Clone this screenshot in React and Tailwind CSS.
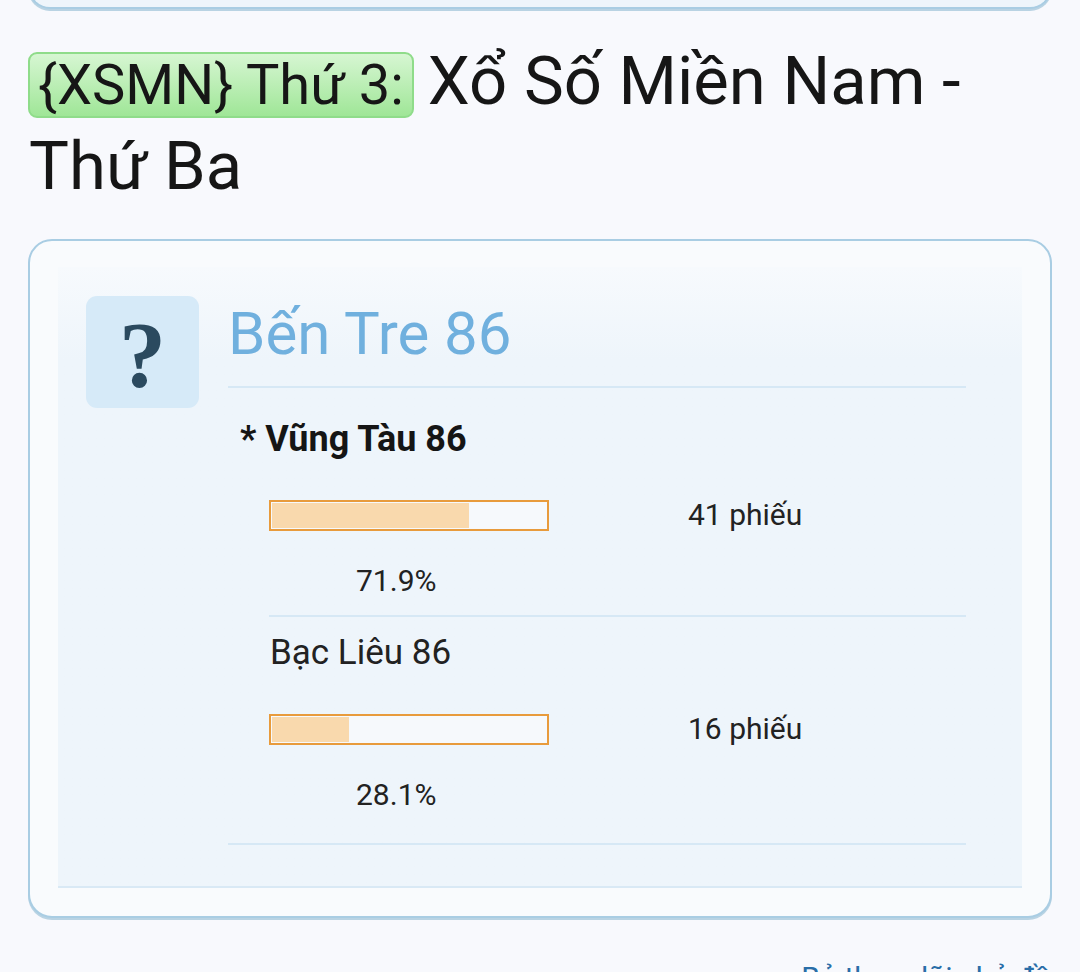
export default function App() {
  const options = [
    { name: '* Vũng Tàu 86', bold: true, votes: 41, pct: 71.9 },
    { name: 'Bạc Liêu 86', bold: false, votes: 16, pct: 28.1 },
  ];

  return (
    <div className="min-h-[972px] w-[1080px] overflow-hidden bg-[#f8f9fd] font-['Roboto',sans-serif] text-[#1a1a1a]">
      {/* tail of the previous card */}
      <div className="mx-[28px] -mt-[40px] h-[49px] rounded-b-[22px] border-2 border-t-0 border-[#a9cde3] bg-[#eef5fb] shadow-[0_2px_0_#b9d3e3]" />

      {/* title */}
      <h1 className="mt-[30px] px-[28px] text-[67px] font-normal leading-[85px] text-[#161616]">
        <span className="mr-[14px] inline-block rounded-[9px] border-2 border-[#8fdc8a] bg-gradient-to-b from-[#d6f6d2] to-[#9fe697] px-[8px] text-[56px] leading-[62px]">
          {'{XSMN} Thứ 3:'}
        </span>
        Xổ Số Miền Nam -<br />
        <span className="ml-[1px]">Thứ Ba</span>
      </h1>

      {/* poll card */}
      <div className="mx-[28px] mt-[30px] rounded-[24px] border-2 border-[#a9cde3] bg-[#f9fbfd] px-[28px] pt-[26px] pb-[28px] shadow-[0_2px_0_#b9d3e3]">
        <div className="border-b-2 border-[#d9e9f5] bg-gradient-to-b from-[#f7fafd] to-[#eef5fb] to-[15%] pt-[29px] pb-[41px] pl-[28px] pr-[56px]">
          <div className="flex">
            <div className="flex h-[112px] w-[113px] shrink-0 items-center justify-center rounded-[11px] bg-[#d6eaf8] pt-[4px] font-['Liberation_Serif',serif] text-[94px] font-bold leading-none text-[#2b4a5f]">
              ?
            </div>
            <div className="ml-[29px] flex-1">
              <div className="border-b-2 border-[#d6e8f5] pb-[16px] pt-[2px] text-[60px] leading-[72px] text-[#70b0de]">
                Bến Tre 86
              </div>

              <div className="border-b-2 border-[#d6e8f5] pb-[30px] pl-[41px]">
                {options.map((o, i) => (
                  <div
                    key={o.name}
                    className={i === 0 ? 'border-b-2 border-[#d6e8f5] pb-[16px]' : ''}
                  >
                    <div
                      className={
                        o.bold
                          ? 'mt-[31px] -ml-[29px] text-[36px] font-bold leading-[40px] text-[#151515]'
                          : 'mt-[16px] ml-[1px] text-[35px] leading-[40px] text-[#222]'
                      }
                    >
                      {o.name}
                    </div>
                    <div className="mt-[38px] flex h-[36px] items-center">
                      <div className="h-[31px] w-[280px] border-2 border-[#e89b3c] bg-[#f6f9fc] p-[1px]">
                        <div
                          className="h-full bg-[#f9d9ad]"
                          style={{ width: `${o.pct}%` }}
                        />
                      </div>
                      <div className="ml-[139px] text-[30px] leading-[36px] text-[#222]">
                        {o.votes} phiếu
                      </div>
                    </div>
                    <div className="mt-[30px] ml-[87px] text-[30px] leading-[36px] text-[#222]">
                      {o.pct}%
                    </div>
                  </div>
                ))}
              </div>
            </div>
          </div>
        </div>
      </div>

      {/* footer link */}
      <div className="mt-[42px] pr-[30px] text-right text-[30px] leading-[36px] text-[#2a6ea8]">
        Bỏ theo dõi chủ đề
      </div>
    </div>
  );
}
